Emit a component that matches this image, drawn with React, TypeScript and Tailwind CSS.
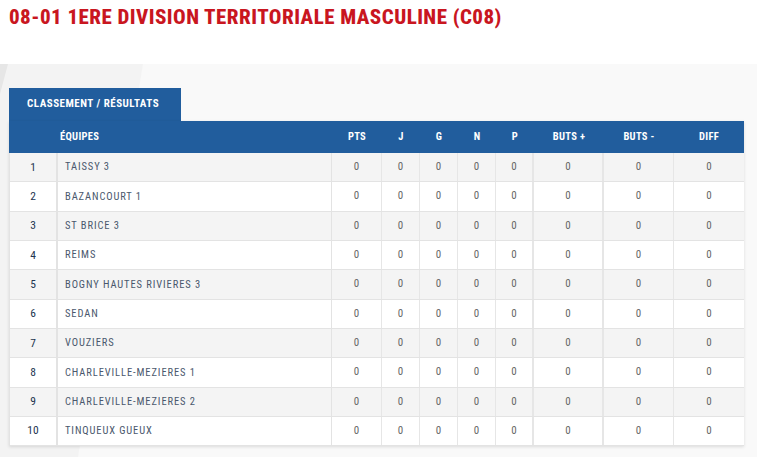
const teams = [
  "TAISSY 3",
  "BAZANCOURT 1",
  "ST BRICE 3",
  "REIMS",
  "BOGNY HAUTES RIVIERES 3",
  "SEDAN",
  "VOUZIERS",
  "CHARLEVILLE-MEZIERES 1",
  "CHARLEVILLE-MEZIERES 2",
  "TINQUEUX GUEUX",
];

const cols = [
  { label: "PTS", w: "w-[50px]" },
  { label: "J", w: "w-[38px]" },
  { label: "G", w: "w-[38px]" },
  { label: "N", w: "w-[38px]" },
  { label: "P", w: "w-[38px]" },
  { label: "BUTS +", w: "w-[70px]" },
  { label: "BUTS -", w: "w-[70px]" },
  { label: "DIFF", w: "w-[70px]" },
];

export default function App() {
  return (
    <div className="w-[757px] h-[457px] overflow-hidden bg-white" style={{ fontFamily: "'Roboto Condensed', 'Open Sans', sans-serif" }}>
      <div className="h-[64px] pl-[9px] pt-[4px]">
        <h1
          className="text-[21px] leading-[26px] font-extrabold text-[#c9161f] tracking-[0.45px] whitespace-nowrap"
          style={{ fontFamily: "'Roboto Condensed', sans-serif" }}
        >
          08-01 1ERE DIVISION TERRITORIALE MASCULINE (C08)
        </h1>
      </div>
      <div className="relative h-[393px] bg-[#f9f9f9] pt-[24px] pl-[9px]">
        <svg className="absolute left-0 top-0 pointer-events-none" width="757" height="393" viewBox="0 0 757 393">
          <polygon points="0,0 143,0 78,393 0,393" fill="#f3f3f3" />
          <polygon points="0,0 8,0 0,30" fill="#e6e6e6" />
        </svg>
        <div className="relative w-[735px]">
          <div className="w-[172px] h-[33px] bg-[#215d9d] text-white text-[11px] font-bold tracking-[0.5px] flex items-center pl-[18px]">
            CLASSEMENT / RÉSULTATS
          </div>
          <div className="shadow-[0_1px_3px_rgba(0,0,0,0.12)]">
            <div className="flex h-[32px] bg-[#215d9d] text-white text-[10.5px] font-bold tracking-[0.3px] items-center">
              <div className="w-[49px]" />
              <div className="w-[274px] pl-[2px]">ÉQUIPES</div>
              {cols.map((c) => (
                <div key={c.label} className={`${c.w} text-center`}>
                  {c.label}
                </div>
              ))}
            </div>
            {teams.map((t, i) => (
              <div
                key={t}
                className={`flex h-[29.33px] items-center border-b border-[#e3e3e3] border-l text-[10.5px] ${i % 2 === 0 ? "bg-[#f4f4f4]" : "bg-white"}`}
              >
                <div className="w-[48px] h-full flex items-center justify-center border-r-2 border-[#e3e3e3] text-[#22344f] text-[11.5px]">
                  {i + 1}
                </div>
                <div className="w-[274px] h-full flex items-center pl-[7px] border-r border-[#e3e3e3] text-[#4a586d] tracking-[0.9px]">
                  {t}
                </div>
                {cols.map((c, j) => (
                  <div
                    key={c.label}
                    className={`${c.w} h-full flex items-center justify-center text-[#666] text-[11px] ${j < cols.length - 1 ? (j === 4 || j === 5 ? "border-r-2 border-[#e6e6e6]" : "border-r border-[#e6e6e6]") : ""}`}
                  >
                    0
                  </div>
                ))}
              </div>
            ))}
          </div>
        </div>
      </div>
    </div>
  );
}
